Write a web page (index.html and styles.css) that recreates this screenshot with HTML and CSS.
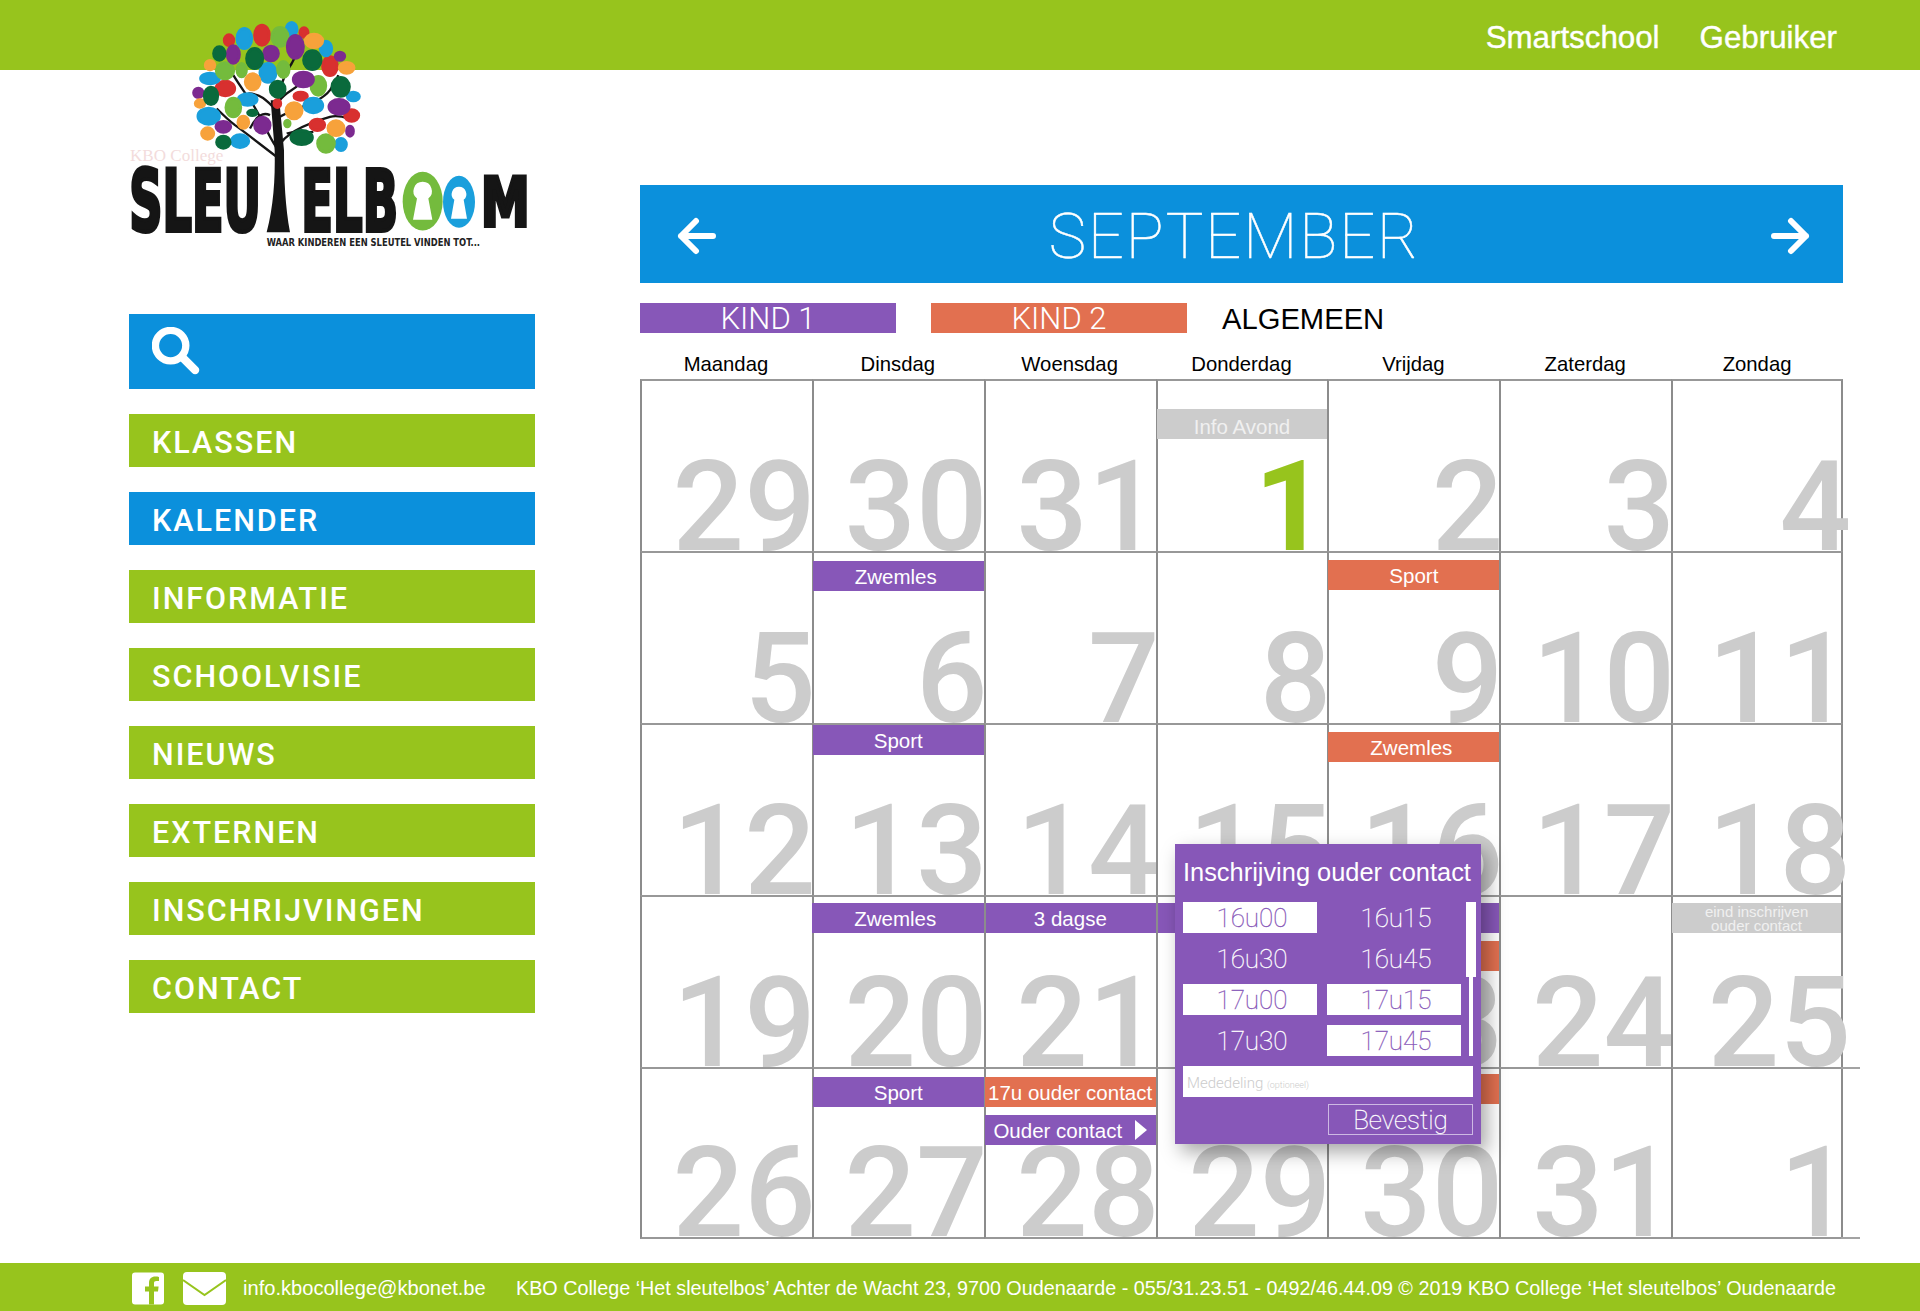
FILE: index.html
```html
<!DOCTYPE html>
<html lang="nl">
<head>
  <meta charset="UTF-8">
  <meta name="viewport" content="width=device-width, initial-scale=1.0">
  <title>Kalender - De Sleutelboom</title>
  <link rel="stylesheet" href="styles.css">
</head>
<body>

  <!-- Top bar -->
  <header class="topbar">
    <a class="topbar-link">Smartschool</a>
    <a class="topbar-link">Gebruiker</a>
  </header>

  <!-- Logo hangs over the top bar -->
  <svg class="logo" viewBox="0 0 1440 800" role="img" aria-label="Sleutelboom logo">
    <text class="logo-faint" x="90" y="482" textLength="280" lengthAdjust="spacingAndGlyphs">KBO College</text>
    <path class="logo-trunk" d="M500 696 C520 620 526 540 524 450 L512 300 L538 300 L552 450 C552 540 556 620 570 696 Z"/>
    <g class="logo-branches">
      <path d="M530 470 C490 440 440 400 405 375 C385 360 370 345 350 325"/>
      <path d="M528 440 C500 400 480 340 450 300 C430 270 415 250 400 225"/>
      <path d="M535 440 C555 400 620 370 690 350 C710 345 730 350 745 355"/>
      <path d="M530 380 C530 300 540 240 575 190 C590 165 590 150 590 140"/>
      <path d="M540 350 C590 320 660 310 690 270 C700 255 710 240 715 225"/>
      <path d="M528 330 C500 300 480 280 445 280"/>
      <path d="M450 385 C470 345 490 335 510 345"/>
      <path d="M540 300 C560 270 590 270 620 230"/>
      <path d="M560 400 C590 390 610 400 640 395"/>
    </g>
    <g class="leaf leaf-red">
      <ellipse cx="387" cy="120" rx="14" ry="16"/><ellipse cx="486" cy="105" rx="22" ry="30"/>
      <ellipse cx="612" cy="97" rx="12" ry="14"/><ellipse cx="690" cy="198" rx="22" ry="28"/>
      <ellipse cx="376" cy="265" rx="28" ry="22"/><ellipse cx="602" cy="288" rx="20" ry="12"/>
      <ellipse cx="532" cy="310" rx="10" ry="12"/><ellipse cx="755" cy="346" rx="21" ry="17"/>
      <ellipse cx="652" cy="374" rx="22" ry="17"/>
    </g>
    <g class="leaf leaf-blue">
      <ellipse cx="433" cy="115" rx="22" ry="30"/><ellipse cx="575" cy="87" rx="16" ry="20"/>
      <ellipse cx="678" cy="145" rx="17" ry="22"/><ellipse cx="504" cy="218" rx="24" ry="28"/>
      <ellipse cx="330" cy="235" rx="28" ry="16"/><ellipse cx="760" cy="289" rx="18" ry="13"/>
      <ellipse cx="443" cy="298" rx="28" ry="17"/><ellipse cx="640" cy="316" rx="28" ry="22"/>
      <ellipse cx="326" cy="348" rx="32" ry="24"/><ellipse cx="420" cy="423" rx="26" ry="19"/>
      <ellipse cx="723" cy="433" rx="16" ry="18"/>
    </g>
    <g class="leaf leaf-green">
      <ellipse cx="540" cy="110" rx="24" ry="28"/><ellipse cx="375" cy="212" rx="26" ry="24"/>
      <ellipse cx="425" cy="210" rx="14" ry="20"/><ellipse cx="550" cy="208" rx="17" ry="24"/>
      <ellipse cx="655" cy="257" rx="22" ry="28"/><ellipse cx="400" cy="322" rx="22" ry="28"/>
      <ellipse cx="562" cy="370" rx="8" ry="10"/><ellipse cx="678" cy="430" rx="25" ry="26"/>
    </g>
    <g class="leaf leaf-purple">
      <ellipse cx="586" cy="140" rx="24" ry="34"/><ellipse cx="400" cy="163" rx="18" ry="26"/>
      <ellipse cx="513" cy="160" rx="22" ry="22"/><ellipse cx="720" cy="168" rx="14" ry="12"/>
      <ellipse cx="610" cy="238" rx="30" ry="22"/><ellipse cx="295" cy="278" rx="14" ry="14"/>
      <ellipse cx="717" cy="320" rx="30" ry="22"/><ellipse cx="487" cy="375" rx="23" ry="24"/>
      <ellipse cx="370" cy="380" rx="22" ry="16"/><ellipse cx="750" cy="393" rx="10" ry="15"/>
    </g>
    <g class="leaf leaf-orange">
      <ellipse cx="642" cy="122" rx="26" ry="20"/><ellipse cx="740" cy="203" rx="22" ry="16"/>
      <ellipse cx="330" cy="195" rx="14" ry="14"/><ellipse cx="458" cy="245" rx="22" ry="24"/>
      <ellipse cx="300" cy="310" rx="14" ry="11"/><ellipse cx="582" cy="332" rx="24" ry="24"/>
      <ellipse cx="430" cy="366" rx="16" ry="18"/><ellipse cx="708" cy="384" rx="24" ry="22"/>
      <ellipse cx="323" cy="400" rx="18" ry="17"/>
    </g>
    <g class="leaf leaf-dark">
      <ellipse cx="358" cy="160" rx="17" ry="20"/><ellipse cx="464" cy="175" rx="24" ry="30"/>
      <ellipse cx="637" cy="180" rx="26" ry="28"/><ellipse cx="722" cy="260" rx="26" ry="28"/>
      <ellipse cx="333" cy="287" rx="20" ry="26"/><ellipse cx="533" cy="267" rx="22" ry="24"/>
      <ellipse cx="457" cy="338" rx="14" ry="8"/><ellipse cx="370" cy="426" rx="20" ry="18"/>
      <ellipse cx="605" cy="412" rx="32" ry="21"/>
    </g>
    <text class="logo-word" x="88" y="692" textLength="395" lengthAdjust="spacingAndGlyphs">SLEU</text>
    <text class="logo-word" x="604" y="692" textLength="290" lengthAdjust="spacingAndGlyphs">ELB</text>
    <text class="logo-word logo-word-m" x="1143" y="678" textLength="146" lengthAdjust="spacingAndGlyphs">M</text>
    <ellipse class="logo-o-green" cx="968" cy="603" rx="60" ry="88"/>
    <ellipse class="logo-o-blue" cx="1077" cy="605" rx="48" ry="78"/>
    <path class="logo-hole" d="M968 545 a28 28 0 0 1 17 50 l12 64 h-58 l12 -64 a28 28 0 0 1 17 -50 Z"/>
    <path class="logo-hole" d="M1077 560 a22 22 0 0 1 14 39 l10 57 h-48 l10 -57 a22 22 0 0 1 14 -39 Z"/>
    <text class="logo-slogan" x="500" y="737" textLength="640" lengthAdjust="spacingAndGlyphs">WAAR KINDEREN EEN SLEUTEL VINDEN TOT...</text>
  </svg>

  <div class="page">

    <!-- Sidebar -->
    <aside class="sidebar">
      <div class="search">
        <svg class="search-icon" viewBox="0 0 50 50">
          <circle cx="19" cy="19" r="15.5"/>
          <path d="M31 31 L44 44"/>
        </svg>
      </div>
      <nav class="menu">
        <a class="menu-item">KLASSEN</a>
        <a class="menu-item active">KALENDER</a>
        <a class="menu-item">INFORMATIE</a>
        <a class="menu-item">SCHOOLVISIE</a>
        <a class="menu-item">NIEUWS</a>
        <a class="menu-item">EXTERNEN</a>
        <a class="menu-item">INSCHRIJVINGEN</a>
        <a class="menu-item">CONTACT</a>
      </nav>
    </aside>

    <!-- Calendar -->
    <main class="agenda">
      <div class="month-bar">
        <svg class="arrow" viewBox="0 0 40 38"><path d="M20 4 L5 19 L20 34 M5 19 H37"/></svg>
        <h1 class="month-name">SEPTEMBER</h1>
        <svg class="arrow" viewBox="0 0 40 38"><path d="M20 4 L35 19 L20 34 M35 19 H3"/></svg>
      </div>

      <div class="filters">
        <div class="filter purple">KIND 1</div>
        <div class="filter orange">KIND 2</div>
        <div class="filter-all">ALGEMEEN</div>
      </div>

      <div class="weekdays">
        <div>Maandag</div>
        <div>Dinsdag</div>
        <div>Woensdag</div>
        <div>Donderdag</div>
        <div>Vrijdag</div>
        <div>Zaterdag</div>
        <div>Zondag</div>
      </div>

      <div class="calendar">
        <div class="day"><span class="num">29</span></div>
        <div class="day"><span class="num">30</span></div>
        <div class="day"><span class="num">31</span></div>
        <div class="day"><div class="event gray mt-28">Info Avond</div><span class="num today">1</span></div>
        <div class="day"><span class="num">2</span></div>
        <div class="day"><span class="num">3</span></div>
        <div class="day"><span class="num">4</span></div>

        <div class="day"><span class="num">5</span></div>
        <div class="day"><div class="event purple mt-8 nudge">Zwemles</div><span class="num">6</span></div>
        <div class="day"><span class="num">7</span></div>
        <div class="day"><span class="num">8</span></div>
        <div class="day"><div class="event orange mt-7">Sport</div><span class="num">9</span></div>
        <div class="day"><span class="num">10</span></div>
        <div class="day"><span class="num">11</span></div>

        <div class="day"><span class="num">12</span></div>
        <div class="day"><div class="event purple">Sport</div><span class="num">13</span></div>
        <div class="day"><span class="num">14</span></div>
        <div class="day"><span class="num">15</span></div>
        <div class="day"><div class="event orange mt-7 nudge">Zwemles</div><span class="num">16</span></div>
        <div class="day"><span class="num">17</span></div>
        <div class="day"><span class="num">18</span></div>

        <div class="day"><span class="num">19</span></div>
        <div class="day"><div class="event purple mt-6 outset nudge">Zwemles</div><span class="num">20</span></div>
        <div class="day"><div class="event purple mt-6 span-3"><span class="span-label">3 dagse</span></div><span class="num">21</span></div>
        <div class="day"><span class="num">22</span></div>
        <div class="day"><div class="event orange mt-44"></div><span class="num">23</span></div>
        <div class="day"><span class="num">24</span></div>
        <div class="day"><div class="event gray small mt-6">eind inschrijven<br>ouder contact</div><span class="num">25</span></div>

        <div class="day"><span class="num">26</span></div>
        <div class="day"><div class="event purple mt-8">Sport</div><span class="num">27</span></div>
        <div class="day"><div class="event orange mt-8">17u ouder contact</div><div class="event purple mt-8">Ouder contact <span class="caret"></span></div><span class="num">28</span></div>
        <div class="day"><span class="num">29</span></div>
        <div class="day"><div class="event orange mt-5"></div><span class="num">30</span></div>
        <div class="day"><span class="num">31</span></div>
        <div class="day last"><span class="num">1</span></div>

        <!-- Popup -->
        <section class="popup">
          <h2 class="popup-title">Inschrijving ouder contact</h2>
          <div class="slots-wrap">
            <div class="slots">
              <div class="slot free">16u00</div>
              <div class="slot">16u15</div>
              <div class="slot">16u30</div>
              <div class="slot">16u45</div>
              <div class="slot free">17u00</div>
              <div class="slot free">17u15</div>
              <div class="slot">17u30</div>
              <div class="slot free">17u45</div>
            </div>
            <div class="scroll-track"><div class="scroll-thumb"></div></div>
          </div>
          <div class="note">Mededeling <small>(optioneel)</small></div>
          <div class="confirm">Bevestig</div>
        </section>
      </div>
    </main>
  </div>

  <!-- Footer -->
  <footer class="footer">
    <svg class="icon-fb" viewBox="0 0 32 32">
      <rect width="32" height="32" rx="3"/>
      <path d="M22 32 V19 H26 L26.6 14 H22 V11 C22 9.4 22.6 8.6 24.4 8.6 H27 V4.4 C26 4.2 24.800 4.100 23.400 4.100 C19.400 4.100 17 6.400 17 10.400 V14 H13 V19 H17 V32 Z"/>
    </svg>
    <svg class="icon-mail" viewBox="0 0 43 33">
      <rect width="43" height="33" rx="4"/>
      <path d="M0 8 L21.500 23 L43 8"/>
    </svg>
    <span class="footer-mail">info.kbocollege@kbonet.be</span>
    <span class="footer-address">KBO College ‘Het sleutelbos’ Achter de Wacht 23, 9700 Oudenaarde - 055/31.23.51 - 0492/46.44.09 © 2019 KBO College ‘Het sleutelbos’ Oudenaarde</span>
  </footer>

</body>
</html>
```
FILE: styles.css
```css
* {
  box-sizing: border-box;
}

html, body {
  height: 100%;
}

body {
  margin: 0;
  width: 1920px;
  height: 1311px;
  display: flex;
  flex-direction: column;
  position: relative;
  overflow: hidden;
  background-color: #fff;
  font-family: "Liberation Sans", Arial, sans-serif;
  color: #000;
}

/* Top bar */
.topbar {
  height: 70px;
  flex: none;
  display: flex;
  justify-content: flex-end;
  align-items: center;
  gap: 40px;
  padding: 5px 83px 0 0;
  background-color: #97c41d;
}

.topbar-link {
  color: #fff;
  font-size: 31.300px;
  -webkit-text-stroke: 0.4px #fff;
}

/* Logo */
.logo {
  position: absolute;
  left: 100px;
  top: 0;
  width: 480px;
  height: 267px;
}

.logo-faint {
  font-family: "Liberation Serif", serif;
  font-size: 52px;
  fill: #f3dcdc;
}

.logo-trunk { fill: #151515; }
.logo-branches path { fill: none; stroke: #151515; stroke-width: 7; }
.leaf { stroke-width: 9; }
.leaf-red { fill: #d8302f; stroke: #d8302f; }
.leaf-blue { fill: #1a9fdc; stroke: #1a9fdc; }
.leaf-green { fill: #74bb3d; stroke: #74bb3d; }
.leaf-purple { fill: #7c2a90; stroke: #7c2a90; }
.leaf-orange { fill: #f7a23b; stroke: #f7a23b; }
.leaf-dark { fill: #0a6a3c; stroke: #0a6a3c; }

.logo-word {
  font-family: "DejaVu Sans Condensed", "DejaVu Sans", sans-serif;
  font-weight: bold;
  font-size: 258px;
  fill: #151515;
  stroke: #151515;
  stroke-width: 12px;
}

.logo-word-m {
  font-size: 205px;
}

.logo-slogan {
  font-family: "DejaVu Sans Condensed", "DejaVu Sans", sans-serif;
  font-weight: bold;
  font-size: 34px;
  fill: #222;
}

.logo-o-green { fill: #74bb3d; }
.logo-o-blue { fill: #1a9fdc; }
.logo-hole { fill: #fff; }

/* Page columns */
.page {
  flex: 1;
  display: flex;
  padding-left: 129px;
}

.sidebar {
  width: 406px;
  flex: none;
  padding-top: 244px;
}

.search {
  height: 75px;
  display: flex;
  align-items: center;
  padding-left: 23px;
  background-color: #0b90dc;
}

.search-icon {
  width: 49px;
  height: 49px;
}

.search-icon circle,
.search-icon path {
  fill: none;
  stroke: #fff;
}

.search-icon circle { stroke-width: 7.500; }
.search-icon path { stroke-width: 8.500; stroke-linecap: round; }

.menu {
  display: flex;
  flex-direction: column;
  gap: 25px;
  margin-top: 25px;
}

.menu-item {
  height: 53px;
  display: flex;
  align-items: center;
  padding: 3px 0 0 23px;
  color: #fff;
  background-color: #97c41d;
  font-family: Roboto, sans-serif;
  font-weight: 500;
  font-size: 30.500px;
  letter-spacing: 2px;
}

.menu-item.active {
  background-color: #0b90dc;
}

/* Calendar column */
.agenda {
  width: 1203px;
  flex: none;
  margin-left: 105px;
  padding-top: 115px;
}

.month-bar {
  height: 98px;
  display: flex;
  align-items: center;
  padding: 4px 32px 0 36px;
  background-color: #0b90dc;
}

.arrow {
  width: 40px;
  height: 38px;
  flex: none;
}

.arrow path {
  fill: none;
  stroke: #fff;
  stroke-width: 6;
  stroke-linecap: round;
  stroke-linejoin: round;
}

.month-name {
  flex: 1;
  margin: 0 18px 0 0;
  text-align: center;
  color: #fff;
  font-family: Roboto, sans-serif;
  font-weight: 100;
  font-size: 63px;
  letter-spacing: 2px;
  -webkit-text-stroke: 0.5px #fff;
}

.filters {
  display: flex;
  align-items: center;
  margin-top: 20px;
  height: 30px;
}

.filter {
  width: 256px;
  height: 30px;
  margin-right: 35px;
  line-height: 31px;
  text-align: center;
  color: #fff;
  font-family: Roboto, sans-serif;
  font-weight: 300;
  font-size: 31px;
}

.filter-all {
  padding-top: 3px;
  font-size: 29.200px;
}

.purple { background-color: #8757b8; }
.orange { background-color: #e27050; }
.gray { background-color: #ccc; }

.weekdays {
  display: grid;
  grid-template-columns: repeat(7, 1fr);
  height: 46px;
  padding-top: 20px;
  text-align: center;
  font-size: 20.300px;
}

/* Day grid */
.calendar {
  display: grid;
  grid-template-columns: repeat(7, 1fr);
  grid-auto-rows: 172px;
  position: relative;
}

.day {
  position: relative;
  display: flex;
  flex-direction: column;
  min-width: 0;
  border-left: 2px solid #8c8c8c;
  border-top: 2px solid #989898;
}

.day:nth-child(7n) {
  border-right: 2px solid #8c8c8c;
}

.day:nth-last-child(-n+8) {
  border-bottom: 2px solid #989898;
}

/* the two lines that run past the last column */
.day.last::before,
.day.last::after {
  content: "";
  position: absolute;
  left: 100%;
  width: 19px;
  height: 2px;
  background-color: #a3a3a3;
}

.day.last::before { top: -2px; }
.day.last::after { bottom: -2px; }

.num {
  margin-top: auto;
  margin-right: -4px;
  text-align: right;
  color: #ccc;
  font-family: Roboto, sans-serif;
  font-weight: 500;
  font-size: 126px;
  line-height: 88px;
  white-space: nowrap;
}

.num.today {
  margin-right: 1px;
  color: #97c41d;
  font-weight: 700;
}

.day:nth-child(7n) .num {
  margin-right: -10px;
}

.event {
  height: 30px;
  flex: none;
  margin-left: -1px;
  line-height: 31px;
  text-align: center;
  color: #fff;
  font-size: 20.500px;
}

.event.gray {
  line-height: 35px;
  color: #f0f0f0;
}

.event.small {
  font-size: 15px;
  line-height: 14px;
  padding-top: 2px;
}

.event.outset {
  margin-left: -2px;
}

.event.nudge {
  padding-right: 5px;
}

.mt-5 { margin-top: 5px; }
.mt-6 { margin-top: 6px; }
.mt-7 { margin-top: 7px; }
.mt-8 { margin-top: 8px; }
.mt-28 { margin-top: 28px; }
.mt-44 { margin-top: 44px; }

.span-3 {
  width: 302%;
  margin-left: 0;
  text-align: left;
}

.span-label {
  display: inline-block;
  width: 33%;
  text-align: center;
}

.caret {
  display: inline-block;
  width: 0;
  height: 0;
  margin-left: 7px;
  vertical-align: -2px;
  border-left: 12px solid #fff;
  border-top: 10px solid transparent;
  border-bottom: 10px solid transparent;
}

/* Popup */
.popup {
  position: absolute;
  left: 535px;
  top: 465px;
  z-index: 2;
  width: 306px;
  height: 300px;
  padding: 14px 8px 0;
  background-color: #8757b8;
  box-shadow: 6px 8px 18px rgba(0, 0, 0, 0.35);
  color: #fff;
}

.popup-title {
  margin: 0;
  height: 44px;
  font-family: "Liberation Sans", sans-serif;
  font-weight: normal;
  font-size: 25.400px;
  white-space: nowrap;
}

.slots-wrap {
  display: flex;
}

.slots {
  width: 278px;
  display: grid;
  grid-template-columns: 134px 134px;
  grid-auto-rows: 31px;
  column-gap: 10px;
  row-gap: 10px;
}

.slot {
  padding: 1px 0 0 4px;
  line-height: 31px;
  text-align: center;
  font-family: Roboto, sans-serif;
  font-weight: 100;
  font-size: 26px;
  -webkit-text-stroke: 0.3px;
}

.slot.free {
  background-color: #fff;
  color: #8757b8;
}

.scroll-track {
  position: relative;
  width: 4px;
  height: 154px;
  margin-left: 8px;
  background-color: #fff;
}

.scroll-thumb {
  position: absolute;
  left: -3px;
  top: 0;
  width: 10px;
  height: 75px;
  background-color: #fff;
}

.note {
  height: 31px;
  width: 290px;
  margin-top: 10px;
  padding: 3px 0 0 4px;
  line-height: 29px;
  background-color: #fff;
  color: #ccc;
  font-family: Roboto, sans-serif;
  font-weight: 300;
  font-size: 15px;
}

.note small {
  font-size: 9px;
}

.confirm {
  width: 145px;
  height: 31px;
  margin: 7px 0 0 145px;
  border: 1px solid #cdb9e3;
  line-height: 31px;
  text-align: center;
  font-family: Roboto, sans-serif;
  font-weight: 100;
  font-size: 26px;
  -webkit-text-stroke: 0.3px;
}

/* Footer */
.footer {
  height: 48px;
  flex: none;
  display: flex;
  align-items: center;
  padding: 2px 84px 0 132px;
  background-color: #97c41d;
  color: #fff;
  font-size: 19.750px;
}

.icon-fb {
  width: 32px;
  height: 33px;
  flex: none;
  fill: #fff;
}

.icon-fb path {
  fill: #97c41d;
}

.icon-mail {
  width: 43px;
  height: 33px;
  flex: none;
  margin-left: 19px;
  fill: #fff;
}

.icon-mail path {
  fill: none;
  stroke: #97c41d;
  stroke-width: 2;
}

.footer-mail {
  margin-left: 17px;
  font-size: 20.100px;
}

.footer-address {
  margin-left: auto;
  white-space: nowrap;
}
```
